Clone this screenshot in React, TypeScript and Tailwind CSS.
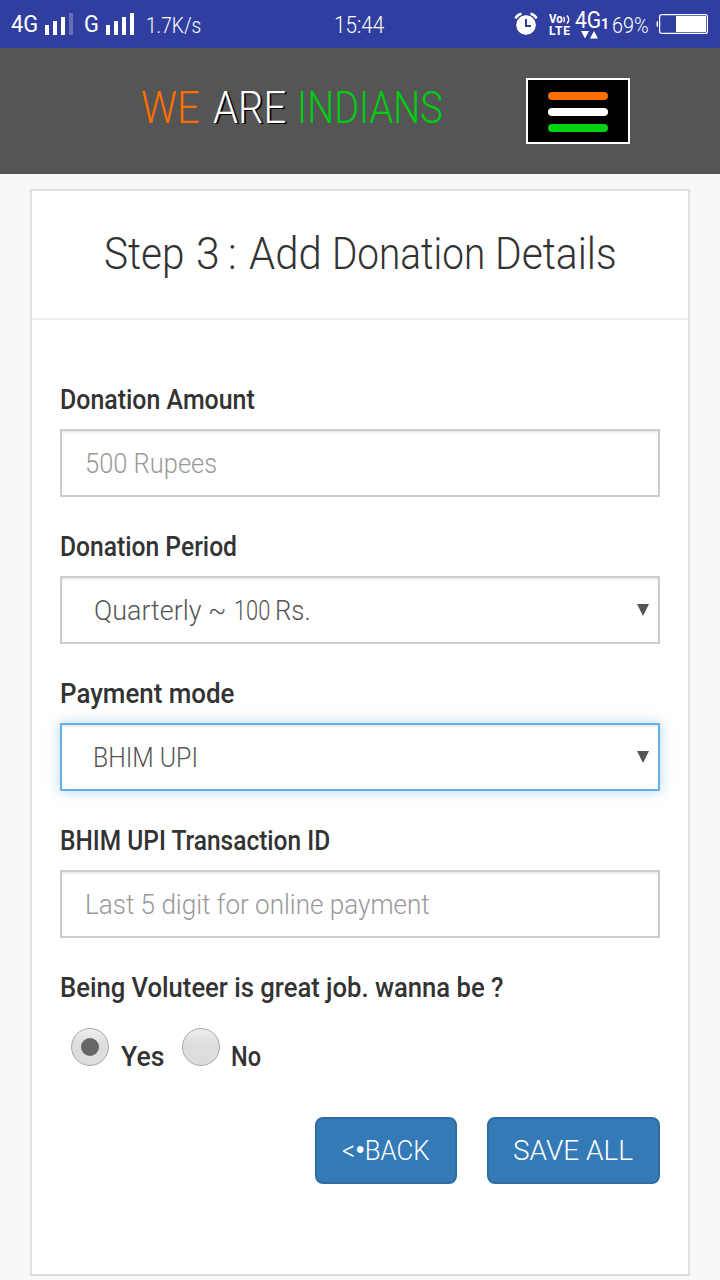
import type { ReactNode } from 'react';

function Fit({ children, className }: { children: ReactNode; className: string }) {
  return <span className={`inline-block origin-left whitespace-pre ${className}`}>{children}</span>;
}

function Label({ children, className }: { children: ReactNode; className: string }) {
  return (
    <label className="block h-10 text-[28px] leading-[39px] font-[480] text-[#333]">
      <Fit className={className}>{children}</Fit>
    </label>
  );
}

const field =
  'mt-[9px] mb-[30px] flex h-[68px] items-center border-2 bg-white pt-0.5 text-[28px] leading-[62px]';
const idle = 'border-[#ccc] shadow-[inset_0_2px_2px_rgba(0,0,0,0.075)]';
const focused =
  'border-[#66afe9] shadow-[inset_0_2px_2px_rgba(0,0,0,0.075),0_0_12px_rgba(102,175,233,0.5)]';

function Arrow() {
  return (
    <svg className="mr-2 mb-0.5 ml-auto" width="14" height="14" viewBox="0 0 14 14">
      <path d="M1 1h12L7 13z" fill="#555" />
    </svg>
  );
}

function Signal({ weak }: { weak?: boolean }) {
  return (
    <svg width="29" height="22" viewBox="0 0 29 22" fill="#fff">
      <path d="M0 12h4v10H0zM8 8h4v14H8zM16 4h4v18h-4z" />
      <path d="M24 0h4v22h-4z" opacity={weak ? 0.25 : 1} />
    </svg>
  );
}

function StatusBar() {
  return (
    <div className="flex h-12 items-center bg-[#303f9f] text-white">
      <div className="ml-[11px] w-[34px] pt-0.5 text-[23px] leading-[46px]">
        <Fit className="scale-x-[0.95]">4G</Fit>
      </div>
      <Signal weak />
      <div className="ml-[10px] w-[22px] pt-0.5 text-[23px] leading-[46px]">
        <Fit className="scale-x-[0.95]">G</Fit>
      </div>
      <Signal />
      <div className="ml-[11px] w-[188px] pt-[3px] text-[22px] leading-[45px] font-light">
        <Fit className="scale-x-[0.87]">1.7K/s</Fit>
      </div>
      <div className="w-[180px] pt-[3px] text-[24px] leading-[45px] font-light">
        <Fit className="scale-x-[0.86]">15:44</Fit>
      </div>
      <svg width="24" height="24" viewBox="0 0 24 24">
        <circle cx="12" cy="13" r="10" fill="#fff" />
        <path d="M1.500 6.500Q3 3 7.500 1.800M22.500 6.500Q21 3 16.500 1.800" stroke="#fff" strokeWidth="2.600" fill="none" />
        <circle cx="12" cy="13" r="10.500" stroke="#303f9f" strokeWidth="1" fill="none" />
        <path d="M12 7v7h5" stroke="#303f9f" strokeWidth="2" fill="none" />
      </svg>
      <div className="ml-[11px] w-[26px] pt-0.5 font-bold">
        <div className="flex h-[11px] items-center text-[12px] leading-[11px]">
          <Fit className="scale-x-[0.95]">Vo</Fit>
          <svg className="shrink-0" width="8" height="11" viewBox="0 0 8 11" fill="none" stroke="#fff" strokeWidth="1.400">
            <path d="M0.500 3q2 2.500 0 5M4 1.500q3.500 4 0 8" />
          </svg>
        </div>
        <div className="text-[12px] leading-[12px] tracking-[0.8px]">LTE</div>
      </div>
      <div className="flex h-[30px] w-[37px] flex-col pt-px">
        <div className="flex h-[21px] items-end">
          <span className="w-[26px] text-[24px] leading-[22px]">
            <Fit className="scale-x-[0.88]">4G</Fit>
          </span>
          <span className="text-[14px] leading-[14px] font-bold">1</span>
        </div>
        <svg className="ml-[6px]" width="18" height="8" viewBox="0 0 18 8" fill="#fff">
          <path d="M0 0h8L4 7.500zM9 7.500h8L13 0z" />
        </svg>
      </div>
      <div className="w-[43px] pt-1 text-[22px] leading-[44px] font-light">
        <Fit className="scale-x-[0.9]">69%</Fit>
      </div>
      <svg width="54" height="22" viewBox="0 0 54 22" fill="none">
        <rect x="4.600" y="1.600" width="47.800" height="18.800" rx="2" stroke="#fff" strokeWidth="1.200" />
        <path d="M21 3h30v16H21z" fill="#fff" />
        <path d="M3 8Q1.500 8 1.500 10v2Q1.500 14 3 14z" fill="#fff" />
      </svg>
    </div>
  );
}

function Radio({ checked }: { checked?: boolean }) {
  return (
    <span className="flex size-[38px] items-center justify-center rounded-full border border-[#a8a8a8] bg-linear-to-b from-[#eee] via-[#dedede] via-40% to-[#dcdcdc]">
      {checked && <span className="size-[18px] rounded-full bg-[#666]" />}
    </span>
  );
}

export default function App() {
  return (
    <div className="h-[1280px] w-[720px] overflow-hidden bg-[#f8f8f8] font-[Roboto,sans-serif]">
      <StatusBar />
      <header className="flex h-[126px] items-start bg-[#555] pt-[30px]">
        <div className="ml-[141px] flex w-[385px] text-[45px] leading-[60px] font-[330]">
          <span className="w-[72px] text-[#ff6f00]">
            <Fit className="scale-x-[0.89]">WE</Fit>
          </span>
          <span className="w-[84px] text-white [text-shadow:2px_1px_0_#000]">
            <Fit className="scale-x-[0.89]">ARE</Fit>
          </span>
          <span className="text-[#0c1]">
            <Fit className="scale-x-[0.845]">INDIANS</Fit>
          </span>
        </div>
        <button className="flex h-[66px] w-[104px] flex-col items-center gap-2 border-2 border-white bg-black pt-3">
          <span className="h-2 w-[60px] rounded-full bg-[#ff6f00]" />
          <span className="h-2 w-[60px] rounded-full bg-white" />
          <span className="h-2 w-[60px] rounded-full bg-[#00d412]" />
        </button>
      </header>
      <main className="mx-[30px] mt-[15px] h-[1087px] border-2 border-[#e0e0e0] bg-white">
        <h1 className="flex h-[129px] border-b-2 border-[#eee] pl-[72px] text-[45px] leading-[125px] font-light text-[#333]">
          <span className="w-[92px]"><Fit className="scale-x-[0.9]">Step </Fit></span>
          <span className="w-[32px]"><Fit className="scale-x-[0.95]">3 </Fit></span>
          <span className="w-[21px]"><Fit className="scale-x-[0.91]">: </Fit></span>
          <span className="w-[83px]"><Fit className="scale-x-[0.93]">Add </Fit></span>
          <span className="w-[163px]"><Fit className="scale-x-[0.86]">Donation </Fit></span>
          <span><Fit className="scale-x-[0.905]">Details</Fit></span>
        </h1>
        <form className="px-7 pt-[60px]">
          <Label className="scale-x-[0.89]">Donation Amount</Label>
          <div className={`${field} ${idle} pl-[23px] font-light text-[#999]`}>
            <Fit className="scale-x-[0.91]">500 Rupees</Fit>
          </div>
          <Label className="scale-x-[0.88]">Donation Period</Label>
          <div className={`${field} ${idle} pl-8 font-light text-[#555]`}>
            <span className="w-[140px]"><Fit className="scale-x-[0.96]">Quarterly ~ </Fit></span>
            <span className="w-[41px]"><Fit className="scale-x-[0.78]">100 </Fit></span>
            <Fit className="scale-x-[0.92]">Rs.</Fit>
            <Arrow />
          </div>
          <Label className="scale-x-[0.925]">Payment mode</Label>
          <div className={`${field} ${focused} pl-[31px] font-light text-[#555]`}>
            <Fit className="scale-x-[0.885]">BHIM UPI</Fit>
            <Arrow />
          </div>
          <Label className="scale-x-[0.875]">BHIM UPI Transaction ID</Label>
          <div className={`${field} ${idle} pl-[23px] font-light text-[#999]`}>
            <Fit className="scale-x-[0.93]">Last 5 digit for online payment</Fit>
          </div>
          <Label className="scale-x-[0.915]">Being Voluteer is great job. wanna be ?</Label>
          <div className="mt-5 flex h-12 items-start pl-[11px] text-[28px] font-[480] text-[#333]">
            <Radio checked />
            <span className="w-[73px] pt-[9px] pl-3 leading-10">
              <Fit className="scale-x-[0.95]">Yes</Fit>
            </span>
            <Radio />
            <span className="pt-[9px] pl-[11px] leading-10">
              <Fit className="scale-x-[0.84]">No</Fit>
            </span>
          </div>
          <div className="mt-[41px] flex justify-end gap-[30px] text-[28px] leading-[63px] font-light text-white">
            <button type="button" className="h-[67px] w-[142px] rounded-lg border-2 border-[#2e6da4] bg-[#337ab7] pl-[25px] text-left">
              <Fit className="scale-x-[0.92]">
                {'<'}
                <span className="font-black">•</span>
                BACK
              </Fit>
            </button>
            <button type="button" className="h-[67px] w-[173px] rounded-lg border-2 border-[#2e6da4] bg-[#337ab7] pl-6 text-left">
              SAVE ALL
            </button>
          </div>
        </form>
      </main>
    </div>
  );
}
